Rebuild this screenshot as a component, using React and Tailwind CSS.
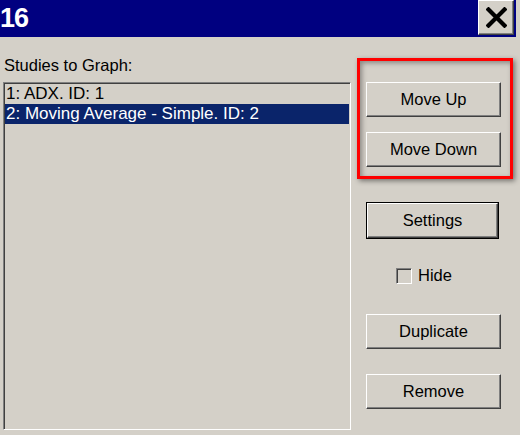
import React from "react";

const font = { fontFamily: '"Liberation Sans", Arial, sans-serif' };

function Btn({ children, className = "" }) {
  return (
    <div
      className={
        "h-[35px] flex items-center justify-center bg-[#d4d0c8] border border-t-white border-l-white border-b-[#404040] border-r-[#404040] shadow-[inset_-1px_-1px_0_#808080] text-[16.5px] text-black " +
        className
      }
    >
      {children}
    </div>
  );
}

export default function App() {
  return (
    <div
      className="w-[520px] h-[435px] bg-[#d4d0c8] relative overflow-hidden"
      style={font}
    >
      {/* title bar */}
      <div className="h-[37px] w-[516px] bg-[#000080] flex items-start justify-between">
        <div className="text-white font-bold text-[27px] leading-[37px] tracking-[-1px]">16</div>
        <div className="mr-[2px] w-[36px] h-[35px] bg-[#d4d0c8] border border-t-white border-l-white border-b-[#404040] border-r-[#404040] shadow-[inset_-1px_-1px_0_#808080] flex items-center justify-center">
          <svg width="21" height="21" viewBox="0 0 21 21">
            <path d="M2.5 2.5 L18.5 18.5 M18.5 2.5 L2.5 18.5" stroke="black" strokeWidth="4.2" strokeLinecap="square" />
          </svg>
        </div>
      </div>

      <div className="flex">
        {/* left column */}
        <div className="ml-[3px] w-[348px] flex flex-col">
          <div className="pt-[18px] pb-[7px] pl-[1px] text-[16.5px] leading-[20px] text-black">
            Studies to Graph:
          </div>
          <div className="h-[348px] border border-t-[#808080] border-l-[#808080] border-b-white border-r-white shadow-[inset_1px_1px_0_#404040,inset_-1px_-1px_0_#d4d0c8] p-[1px] flex flex-col">
            <div className="h-[20px] leading-[20px] pl-[1px] text-[17px] text-black">1: ADX. ID: 1</div>
            <div className="h-[20px] leading-[20px] pl-[1px] text-[17px] text-white bg-[#0a246a]">
              2: Moving Average - Simple. ID: 2
            </div>
          </div>
        </div>

        {/* right column */}
        <div className="ml-[15px] w-[135px] flex flex-col pt-[45px]">
          <Btn>Move Up</Btn>
          <Btn className="mt-[15px]">Move Down</Btn>
          <div className="mt-[35px] w-[133px] border border-black">
            <Btn className="h-[33px]">Settings</Btn>
          </div>
          <div className="mt-[29px] flex items-center pl-[30px] h-[16px]">
            <div className="w-[16px] h-[16px] border border-t-[#808080] border-l-[#808080] border-b-white border-r-white shadow-[inset_1px_1px_0_#404040]" />
            <span className="ml-[6px] text-[16.5px] text-black leading-[16px] -mt-[2px]">Hide</span>
          </div>
          <Btn className="mt-[30px]">Duplicate</Btn>
          <Btn className="mt-[25px]">Remove</Btn>
        </div>
      </div>

      {/* red annotation */}
      <div className="absolute left-[357px] top-[58px] w-[156px] h-[121px] border-[3px] border-[#ff0000] shadow-[2px_2px_5px_rgba(0,0,0,0.45),inset_2px_2px_5px_rgba(0,0,0,0.35)]" />
    </div>
  );
}
